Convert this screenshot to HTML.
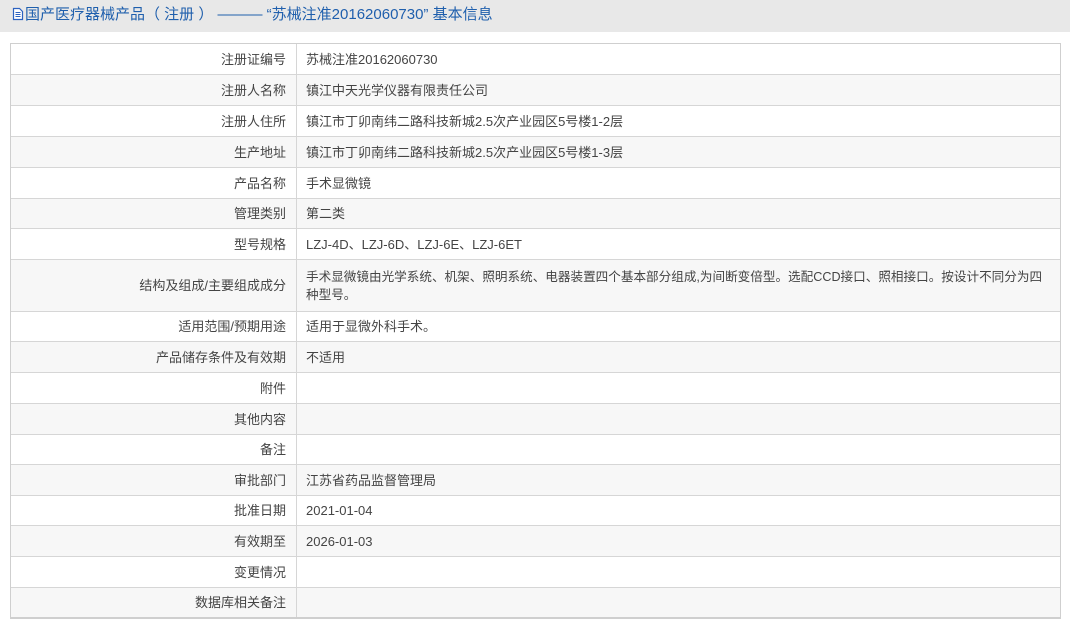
<!DOCTYPE html>
<html><head><meta charset="utf-8"><style>
*{margin:0;padding:0;box-sizing:border-box}
body{width:1070px;height:625px;background:#fff;font-family:"Liberation Sans","Noto Sans CJK SC",sans-serif;position:relative;overflow:hidden}
.hd{position:absolute;left:0;top:0;width:1070px;height:32px;background:#e8e8e8;color:#1f5fad;font-size:15px;line-height:30px;padding-left:12px;white-space:nowrap}
.hd svg{vertical-align:-2px;margin-right:1px}
.tb{position:absolute;left:10px;top:43px;width:1051px;border:1px solid #cfcfcf;border-bottom-width:2px}
.r{display:flex;border-top:1px solid #d6d6d6;font-size:13px;color:#444;line-height:18px}
.r:first-child{border-top:none}
.r:nth-child(even){background:#f7f7f7}
.l{width:286px;border-right:1px solid #d6d6d6;text-align:right;padding-right:10px;display:flex;align-items:center;justify-content:flex-end}
.v{flex:1;padding-left:9px;display:flex;align-items:center}
.l span,.v span{display:block;margin-top:1px}
</style></head><body>
<div class="hd"><svg width="12" height="14" viewBox="0 0 12 14"><path d="M1.5 1.5h6l3 3v8h-9z" fill="#fff" stroke="#2c62c0" stroke-width="1.2"/><path d="M3.5 5.5h5M3.5 7.5h5M3.5 9.5h5" stroke="#2c62c0"/></svg>国产医疗器械产品（ 注册 ） ——— “苏械注准20162060730” 基本信息</div>
<div class="tb">
<div class="r" style="height:30px"><div class="l"><span>注册证编号</span></div><div class="v"><span>苏械注准20162060730</span></div></div>
<div class="r" style="height:31px"><div class="l"><span>注册人名称</span></div><div class="v"><span>镇江中天光学仪器有限责任公司</span></div></div>
<div class="r" style="height:31px"><div class="l"><span>注册人住所</span></div><div class="v"><span>镇江市丁卯南纬二路科技新城2.5次产业园区5号楼1-2层</span></div></div>
<div class="r" style="height:31px"><div class="l"><span>生产地址</span></div><div class="v"><span>镇江市丁卯南纬二路科技新城2.5次产业园区5号楼1-3层</span></div></div>
<div class="r" style="height:31px"><div class="l"><span>产品名称</span></div><div class="v"><span>手术显微镜</span></div></div>
<div class="r" style="height:30px"><div class="l"><span>管理类别</span></div><div class="v"><span>第二类</span></div></div>
<div class="r" style="height:31px"><div class="l"><span>型号规格</span></div><div class="v"><span>LZJ-4D、LZJ-6D、LZJ-6E、LZJ-6ET</span></div></div>
<div class="r" style="height:52px"><div class="l"><span>结构及组成/主要组成成分</span></div><div class="v" style="white-space:nowrap;font-size:12.6px"><span>手术显微镜由光学系统、机架、照明系统、电器装置四个基本部分组成,为间断变倍型。选配CCD接口、照相接口。按设计不同分为四<br>种型号。</span></div></div>
<div class="r" style="height:30px"><div class="l"><span>适用范围/预期用途</span></div><div class="v"><span>适用于显微外科手术。</span></div></div>
<div class="r" style="height:31px"><div class="l"><span>产品储存条件及有效期</span></div><div class="v"><span>不适用</span></div></div>
<div class="r" style="height:31px"><div class="l"><span>附件</span></div><div class="v"></div></div>
<div class="r" style="height:31px"><div class="l"><span>其他内容</span></div><div class="v"></div></div>
<div class="r" style="height:30px"><div class="l"><span>备注</span></div><div class="v"></div></div>
<div class="r" style="height:31px"><div class="l"><span>审批部门</span></div><div class="v"><span>江苏省药品监督管理局</span></div></div>
<div class="r" style="height:30px"><div class="l"><span>批准日期</span></div><div class="v"><span>2021-01-04</span></div></div>
<div class="r" style="height:31px"><div class="l"><span>有效期至</span></div><div class="v"><span>2026-01-03</span></div></div>
<div class="r" style="height:31px"><div class="l"><span>变更情况</span></div><div class="v"></div></div>
<div class="r" style="height:30px"><div class="l"><span>数据库相关备注</span></div><div class="v"></div></div>
</div>
</body></html>
